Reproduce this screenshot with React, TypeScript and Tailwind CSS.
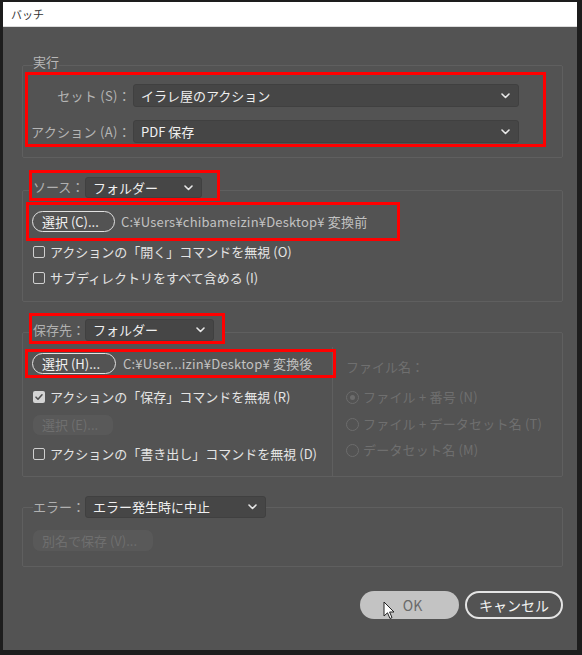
import React from "react";

function Chevron() {
  return (
    <svg width="9" height="6" viewBox="0 0 9 6" className="shrink-0">
      <path d="M1 1l3.5 3.5L8 1" stroke="#e8e8e8" strokeWidth="1.6" fill="none" strokeLinecap="round" strokeLinejoin="round" />
    </svg>
  );
}

function Select({ text, className }: { text: string; className: string }) {
  return (
    <div
      className={
        "flex items-center justify-between rounded-[3px] border border-[#404040] bg-[#464646] pl-[7px] pr-[8px] text-[13px] text-[#f0f0f0] " +
        className
      }
    >
      <span className="leading-[16px]">{text}</span>
      <Chevron />
    </div>
  );
}

function Pill({ text, className }: { text: string; className: string }) {
  return (
    <div
      className={
        "flex items-center rounded-full border-[1.5px] border-[#e2e2e2] pl-[9px] text-[13px] leading-[16px] text-[#f2f2f2] shrink-0 " +
        className
      }
    >
      {text}
    </div>
  );
}

function Check({ checked }: { checked?: boolean }) {
  if (checked) {
    return (
      <div className="w-[12px] h-[12px] rounded-[2px] bg-[#d4d4d4] flex items-center justify-center shrink-0">
        <svg width="10" height="10" viewBox="0 0 10 10">
          <path d="M2 5.2l2 2L8 2.8" stroke="#505050" strokeWidth="1.6" fill="none" strokeLinecap="round" strokeLinejoin="round" />
        </svg>
      </div>
    );
  }
  return <div className="w-[12px] h-[12px] rounded-[2px] border-[1.5px] border-[#cfcfcf] shrink-0" />;
}

function CheckRow({ text, checked, className }: { text: string; checked?: boolean; className: string }) {
  return (
    <div className={"ml-[10px] h-[18px] flex items-center gap-[5px] text-[13px] text-[#e4e4e4] " + className}>
      <Check checked={checked} />
      <span className="leading-[18px]">{text}</span>
    </div>
  );
}

function Radio({ text, on, className }: { text: string; on?: boolean; className: string }) {
  return (
    <div className={"h-[18px] flex items-center gap-[4px] text-[13px] text-[#6f6f6f] " + className}>
      <div className="w-[13px] h-[13px] rounded-full border-[1.5px] border-[#6c6c6c] flex items-center justify-center shrink-0">
        {on && <div className="w-[5px] h-[5px] rounded-full bg-[#6c6c6c]" />}
      </div>
      <span className="leading-[18px] tracking-[0.2px]">{text}</span>
    </div>
  );
}

export default function App() {
  return (
    <div className="w-[582px] h-[655px] bg-[#1d1d1d] pl-[3px] pr-[5px] pt-[2px] pb-[5px] flex flex-col font-['Noto_Sans_CJK_JP','Noto_Sans',sans-serif]">
      <div className="h-[25px] shrink-0 bg-white flex items-center pl-[8px] text-[11px] text-[#333333] border-b border-[#dcdcdc]">
        バッチ
      </div>
      <div className="flex-1 bg-[#535353] pl-[19px] pr-[14px] flex flex-col">
        {/* 実行 */}
        <div className="mt-[38px] h-[93px] border border-[#5f5f5f] rounded-[2px] flex flex-col">
          <div className="-mt-[11px] ml-[10px] self-start bg-[#535353] text-[13px] leading-[14px] text-[#b8b8b8]">実行</div>
          <div className="mt-[3px] ml-[2px] w-[521px] h-[75px] border-[3px] border-[#ff0000] flex flex-col pt-[9px] gap-[13px]">
            <div className="flex items-center h-[23px]">
              <div className="w-[103px] text-right text-[13px] text-[#b5b5b5] leading-[16px] tracking-[0.3px]">セット (S)：</div>
              <Select text="イラレ屋のアクション" className="ml-[2px] w-[386px] h-[23px]" />
            </div>
            <div className="flex items-center h-[23px]">
              <div className="w-[103px] text-right text-[13px] text-[#b5b5b5] leading-[16px] tracking-[0.3px]">アクション (A)：</div>
              <Select text="PDF 保存" className="ml-[2px] w-[386px] h-[23px]" />
            </div>
          </div>
        </div>

        {/* ソース */}
        <div className="mt-[12px] ml-[7px] self-start relative z-10 h-[31px] w-[191px] border-[3px] border-[#ff0000] bg-[#535353] flex items-end pl-[1px]">
          <div className="w-[52px] h-[22px] flex items-center text-[13px] text-[#b0b0b0] leading-[16px]">ソース：</div>
          <Select text="フォルダー" className="w-[117px] h-[21px]" />
        </div>
        <div className="-mt-[11px] h-[112px] border border-[#5f5f5f] rounded-[2px] flex flex-col">
          <div className="mt-[11px] ml-[3px] w-[374px] h-[39px] border-[3px] border-[#ff0000] flex items-center pl-[3px] gap-[6px]">
            <Pill text="選択 (C)..." className="w-[83px] h-[21px]" />
            <span className="text-[13px] text-[#c2c2c2] leading-[16px] whitespace-nowrap tracking-[0.2px]">C:¥Users¥chibameizin¥Desktop¥ 変換前</span>
          </div>
          <CheckRow text="アクションの「開く」コマンドを無視 (O)" className="mt-[2px]" />
          <CheckRow text="サブディレクトリをすべて含める (I)" className="mt-[8px]" />
        </div>

        {/* 保存先 */}
        <div className="mt-[11px] ml-[7px] self-start relative z-10 h-[31px] w-[196px] border-[3px] border-[#ff0000] bg-[#535353] flex items-end pl-[1px]">
          <div className="w-[52px] h-[22px] flex items-center text-[13px] text-[#b0b0b0] leading-[16px]">保存先：</div>
          <Select text="フォルダー" className="w-[129px] h-[22px]" />
        </div>
        <div className="-mt-[12px] h-[145px] border border-[#5f5f5f] rounded-[2px] flex">
          <div className="w-[309px] shrink-0 flex flex-col">
            <div className="mt-[16px] ml-[2px] relative z-10 w-[311px] h-[29px] border-[3px] border-[#ff0000] flex items-center pl-[4px] gap-[7px]">
              <Pill text="選択 (H)..." className="w-[84px] h-[21px]" />
              <span className="text-[13px] text-[#c2c2c2] leading-[16px] whitespace-nowrap tracking-[0.2px]">C:¥User...izin¥Desktop¥ 変換後</span>
            </div>
            <CheckRow text="アクションの「保存」コマンドを無視 (R)" checked className="mt-[10px]" />
            <div className="mt-[9px] ml-[10px] w-[80px] h-[20px] rounded-[7px] bg-[#595959] flex items-center pl-[9px] text-[13px] text-[#6f6f6f] leading-[16px]">
              選択 (E)...
            </div>
            <CheckRow text="アクションの「書き出し」コマンドを無視 (D)" className="mt-[10px]" />
          </div>
          <div className="flex-1 mt-[14px] border-l border-[#5f5f5f] pl-[13px] flex flex-col">
            <div className="mt-[11px] h-[18px] text-[13px] leading-[18px] text-[#6f6f6f]">ファイル名：</div>
            <Radio text="ファイル + 番号 (N)" on className="mt-[12px]" />
            <Radio text="ファイル + データセット名 (T)" className="mt-[9px]" />
            <Radio text="データセット名 (M)" className="mt-[8px]" />
          </div>
        </div>

        {/* エラー */}
        <div className="mt-[19px] ml-[11px] self-start relative z-10 bg-[#535353] flex items-center h-[22px]">
          <div className="w-[52px] text-[13px] text-[#b0b0b0] leading-[16px]">エラー：</div>
          <Select text="エラー発生時に中止" className="w-[181px] h-[22px]" />
        </div>
        <div className="-mt-[11px] h-[60px] border border-[#5f5f5f] rounded-[2px] flex flex-col">
          <div className="mt-[22px] ml-[10px] w-[120px] h-[21px] rounded-[7px] bg-[#595959] flex items-center pl-[9px] text-[13px] text-[#6f6f6f] leading-[16px]">
            別名で保存 (V)...
          </div>
        </div>

        {/* Buttons */}
        <div className="mt-[24px] flex justify-end gap-[6px]">
          <div className="relative w-[99px] h-[28px] rounded-full bg-[#c3c3c3] flex items-center justify-center text-[14px] text-[#6a6a6a]">
            <span className="pl-[6px]">OK</span>
            <svg width="12" height="19" viewBox="0 0 12 19" className="absolute left-[23px] top-[10px]">
              <path d="M1 1 L1 15 L4.5 11.8 L7 17.5 L9 16.6 L6.6 11 L11 11 Z" fill="#ffffff" stroke="#222222" strokeWidth="1" strokeLinejoin="round" />
            </svg>
          </div>
          <div className="w-[98px] h-[28px] rounded-full border-2 border-[#e4e4e4] flex items-center justify-center text-[14px] text-[#f2f2f2]">
            キャンセル
          </div>
        </div>
      </div>
    </div>
  );
}
